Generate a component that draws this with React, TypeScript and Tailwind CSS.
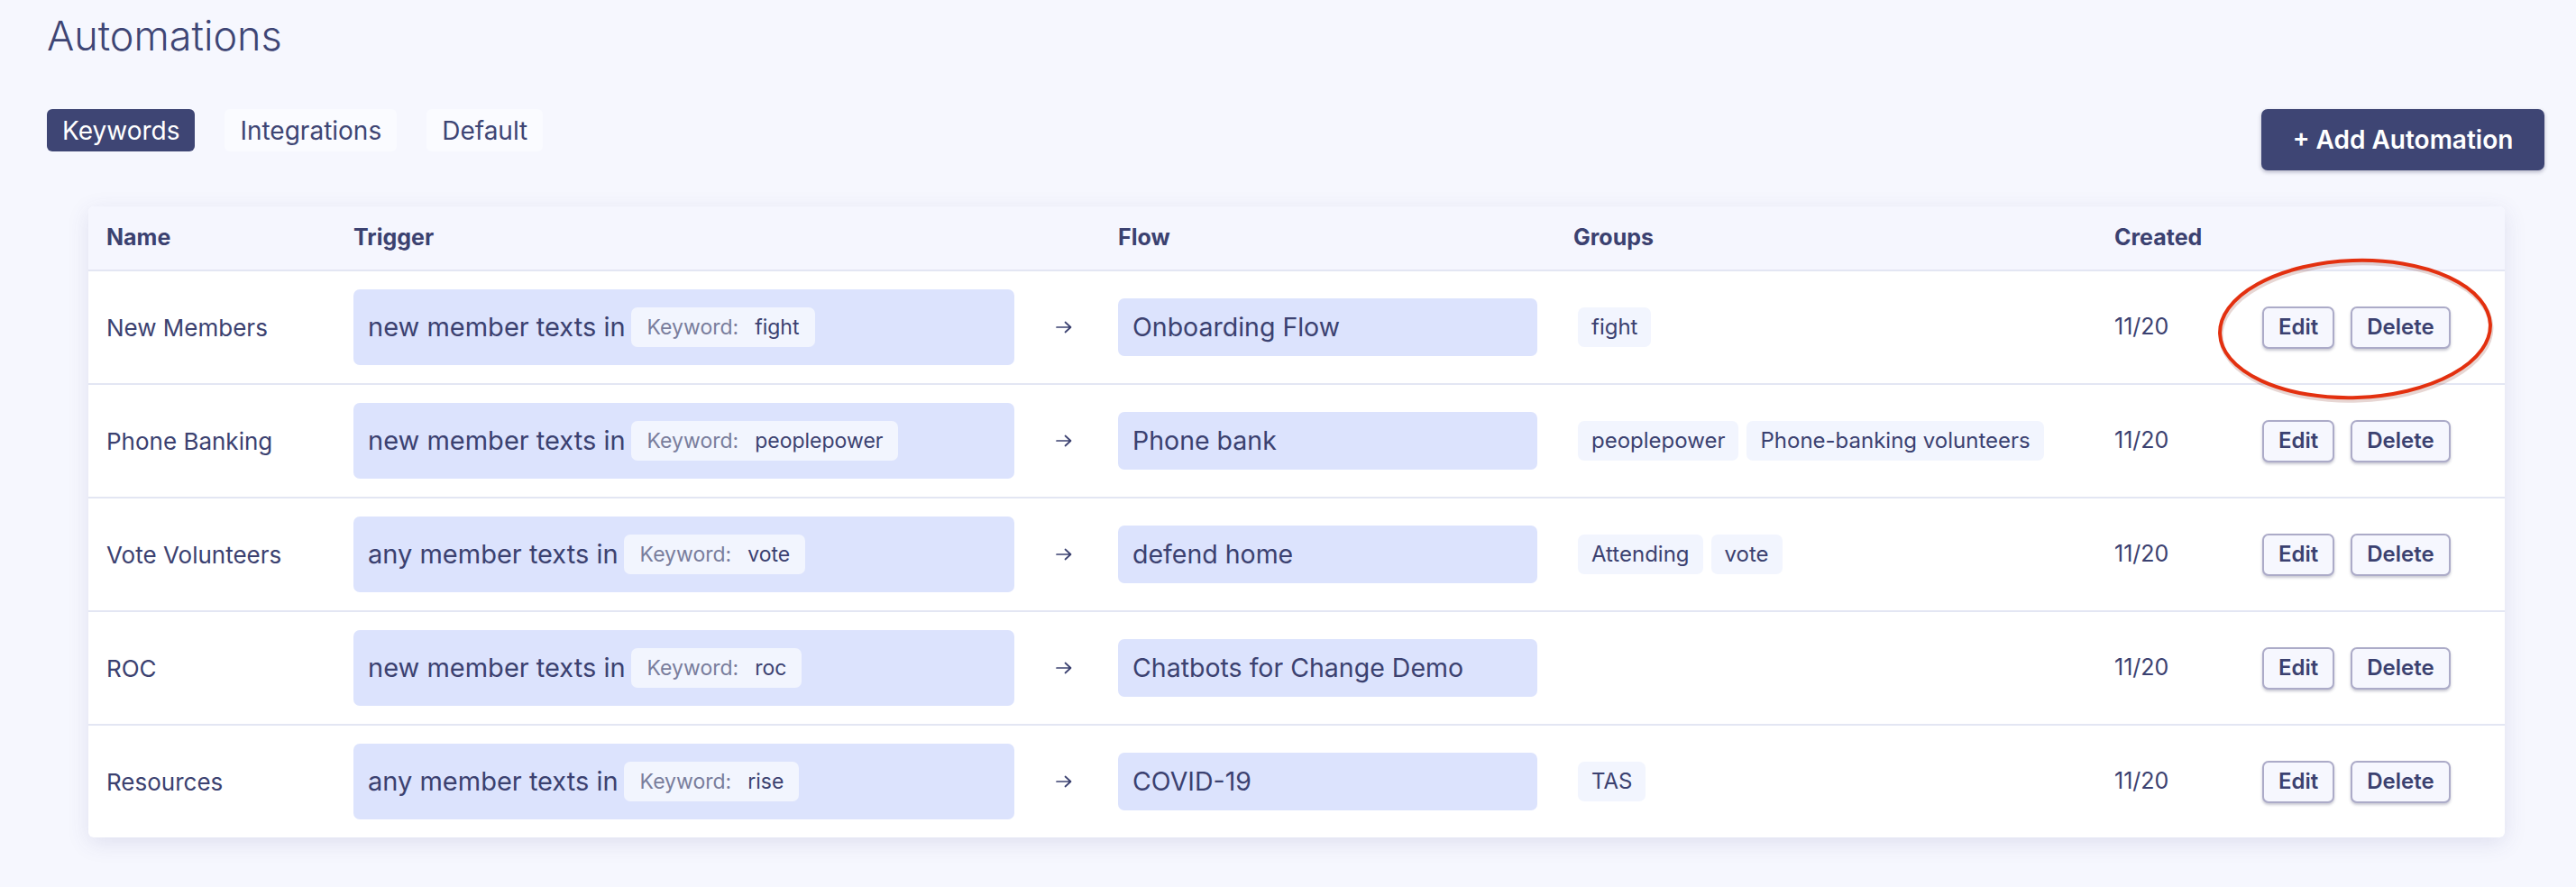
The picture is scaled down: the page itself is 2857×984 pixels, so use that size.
import React from "react";

type Row = {
  name: string;
  who: string;
  keyword: string;
  flow: string;
  groups: string[];
  created: string;
};

const rows: Row[] = [
  { name: "New Members", who: "new member texts in", keyword: "fight", flow: "Onboarding Flow", groups: ["fight"], created: "11/20" },
  { name: "Phone Banking", who: "new member texts in", keyword: "peoplepower", flow: "Phone bank", groups: ["peoplepower", "Phone-banking volunteers"], created: "11/20" },
  { name: "Vote Volunteers", who: "any member texts in", keyword: "vote", flow: "defend home", groups: ["Attending", "vote"], created: "11/20" },
  { name: "ROC", who: "new member texts in", keyword: "roc", flow: "Chatbots for Change Demo", groups: [], created: "11/20" },
  { name: "Resources", who: "any member texts in", keyword: "rise", flow: "COVID-19", groups: ["TAS"], created: "11/20" },
];

const gridCols = "grid grid-cols-[274px_733px_115px_465px_640px_164px_1fr]";

function Arrow() {
  return (
    <svg width="18" height="14" viewBox="0 0 18 14" fill="none" stroke="#3b4170" strokeWidth="1.7" strokeLinecap="round" strokeLinejoin="round">
      <path d="M1 7h15.5M10.5 1.5L16.5 7l-6 5.5" />
    </svg>
  );
}

function ActionButton({ label }: { label: string }) {
  return (
    <button className="h-[47px] px-[16px] rounded-[7px] border-2 border-[#acabc8] bg-[#f6f7fe] text-[24px] font-semibold text-[#3b4170] shadow-[0_2px_3px_rgba(40,40,80,0.25)] leading-none">
      {label}
    </button>
  );
}

export default function App() {
  return (
    <div
      className="relative min-h-[984px] w-full bg-[#f6f7fe] text-[#3b4170] pl-[52px] pr-[35px]"
      style={{ fontFamily: "Inter, 'Noto Sans', sans-serif" }}
    >
      <h1 className="pt-[17px] text-[45px] font-light leading-none text-[#3e4574]">Automations</h1>

      <div className="mt-[59px] flex items-start justify-between">
        <div className="flex gap-[33px]">
          <button className="h-[47px] px-[17px] rounded-[6px] bg-[#3e4574] text-white text-[28px] leading-none">Keywords</button>
          <button className="h-[47px] px-[17px] rounded-[6px] bg-[#fafbff] text-[#3e4574] text-[28px] leading-none">Integrations</button>
          <button className="h-[47px] px-[17px] rounded-[6px] bg-[#fafbff] text-[#3e4574] text-[28px] leading-none">Default</button>
        </div>
        <button className="h-[68px] w-[314px] rounded-[7px] bg-[#3e4574] text-white text-[28px] font-semibold leading-none shadow-[0_2px_4px_rgba(30,30,70,0.3)]">
          + Add Automation
        </button>
      </div>

      <div className="mt-[40px] ml-[46px] mr-[44px] rounded-[6px] bg-white shadow-[0_6px_24px_rgba(70,70,140,0.13)] overflow-hidden">
        <div className={`${gridCols} h-[72px] items-center border-b-2 border-[#e3e6f3] bg-[#f5f6fe] pl-[20px] text-[25px] font-bold text-[#3b4170]`}>
          <div>Name</div>
          <div>Trigger</div>
          <div></div>
          <div>Flow</div>
          <div className="pl-[40px]">Groups</div>
          <div>Created</div>
          <div></div>
        </div>

        {rows.map((r, i) => (
          <div
            key={r.name}
            className={`${gridCols} items-center pl-[20px] ${i < rows.length - 1 ? "h-[126px] border-b-2 border-[#e3e6f3]" : "h-[124px]"}`}
          >
            <div className="text-[26px]">{r.name}</div>
            <div className="flex h-[84px] items-center rounded-[7px] bg-[#dce3fd] pl-[16px]">
              <span className="text-[29px]">{r.who}</span>
              <span className="ml-[6px] flex h-[44px] items-center rounded-[7px] bg-[#f2f5fe] pl-[18px] pr-[17px] text-[23px]">
                <span className="text-[#797d9c]">Keyword:</span>
                <span className="ml-[18px]">{r.keyword}</span>
              </span>
            </div>
            <div className="flex justify-center pr-[6px]">
              <Arrow />
            </div>
            <div className="flex h-[64px] items-center rounded-[7px] bg-[#dce3fd] px-[16px] text-[28.5px]">{r.flow}</div>
            <div className="flex gap-[9px] pl-[45px]">
              {r.groups.map((g) => (
                <span key={g} className="flex h-[44px] items-center rounded-[7px] bg-[#f2f5fe] px-[15px] text-[24px]">
                  {g}
                </span>
              ))}
            </div>
            <div className="text-[25px]">{r.created}</div>
            <div className="flex gap-[18px]">
              <ActionButton label="Edit" />
              <ActionButton label="Delete" />
            </div>
          </div>
        ))}
      </div>

      <svg
        className="absolute left-[2452px] top-[281px] pointer-events-none"
        width="320"
        height="170"
        viewBox="0 0 320 170"
        fill="none"
      >
        <ellipse cx="160" cy="85" rx="150" ry="76" stroke="rgba(120,30,10,0.18)" strokeWidth="5" transform="translate(1 2) rotate(-2 160 85)" />
        <ellipse cx="160" cy="84" rx="150" ry="76" stroke="#e3300f" strokeWidth="4" transform="rotate(-2 160 84)" />
      </svg>
    </div>
  );
}
